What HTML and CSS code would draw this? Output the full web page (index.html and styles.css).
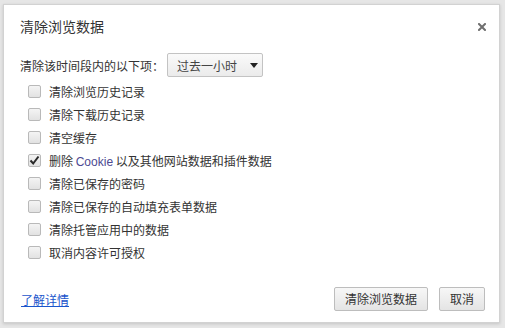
FILE: index.html
```html
<!DOCTYPE html>
<html lang="zh-CN">
<head>
<meta charset="utf-8">
<title>清除浏览数据</title>
<link rel="stylesheet" href="styles.css">
</head>
<body>
<div class="dialog">
  <div class="header">
    <h1 class="title">清除浏览数据</h1>
    <span class="close" aria-label="关闭">
      <svg width="8" height="8" viewBox="0 0 8 8"><path d="M1 1L7 7M7 1L1 7" stroke="#6f6f6f" stroke-width="2" stroke-linecap="square"/></svg>
    </span>
  </div>
  <div class="time-row">
    <span class="time-label">清除该时间段内的以下项：</span>
    <div class="select">
      <span class="select-text">过去一小时</span>
      <svg class="select-arrow" width="8" height="5" viewBox="0 0 8 5"><path d="M0 0H8L4 5Z" fill="#222"/></svg>
    </div>
  </div>
  <ul class="options">
    <li class="option"><span class="cb"></span><span class="label">清除浏览历史记录</span></li>
    <li class="option"><span class="cb"></span><span class="label">清除下载历史记录</span></li>
    <li class="option"><span class="cb"></span><span class="label">清空缓存</span></li>
    <li class="option"><span class="cb checked"><svg width="11" height="11" viewBox="0 0 11 11"><path d="M1.5 5.5L4.2 8.5L9.5 1.5" fill="none" stroke="#2a2a2a" stroke-width="2"/></svg></span><span class="label">删除 <span class="cookie">Cookie</span> 以及其他网站数据和插件数据</span></li>
    <li class="option"><span class="cb"></span><span class="label">清除已保存的密码</span></li>
    <li class="option"><span class="cb"></span><span class="label">清除已保存的自动填充表单数据</span></li>
    <li class="option"><span class="cb"></span><span class="label">清除托管应用中的数据</span></li>
    <li class="option"><span class="cb"></span><span class="label">取消内容许可授权</span></li>
  </ul>
  <div class="footer">
    <a class="link" href="#">了解详情</a>
    <div class="buttons">
      <button class="btn">清除浏览数据</button>
      <button class="btn">取消</button>
    </div>
  </div>
</div>
</body>
</html>
```

FILE: styles.css
```css
* { box-sizing: border-box; }
html, body { margin: 0; padding: 0; }
body {
  width: 505px;
  height: 328px;
  background: #e6e6e6;
  padding: 4px 5px 5px 3px;
  font-family: "Noto Sans CJK SC", "Noto Sans", sans-serif;
  font-size: 12px;
  color: #333;
  overflow: hidden;
}
.dialog {
  height: 319px;
  background: #fff;
  border: 1px solid #d2d2d2;
  box-shadow: 0 1px 3px rgba(0,0,0,0.15);
  padding: 0 14px 0 16px;
  display: flex;
  flex-direction: column;
}
.header {
  height: 41px;
  display: flex;
  align-items: center;
  justify-content: space-between;
}
.title {
  margin: 0;
  font-size: 14px;
  font-weight: normal;
  color: #333;
  line-height: 20px;
}
.close {
  display: flex;
  margin-top: 3px;
  margin-right: -1px;
}
.time-row {
  margin-top: 7px;
  display: flex;
  align-items: center;
  gap: 3px;
  height: 24px;
}
.select {
  width: 96px;
  height: 24px;
  border: 1px solid #c3c3c3;
  border-radius: 2px;
  background: linear-gradient(#fafafa, #ebebeb);
  display: flex;
  align-items: center;
  justify-content: space-between;
  padding: 0 4px 0 9px;
}
.select-text { color: #444; }
.options {
  list-style: none;
  margin: 3px 0 0;
  padding: 0 0 0 8px;
}
.option {
  height: 23px;
  display: flex;
  align-items: center;
  gap: 8px;
}
.cb {
  width: 13px;
  height: 13px;
  border: 1px solid #b9b9b9;
  border-radius: 2px;
  background: linear-gradient(#f4f4f4, #e2e2e2);
  display: flex;
  align-items: center;
  justify-content: center;
  flex: none;
}
.label { color: #333; }
.cookie { color: #4d4a92; font-family: "Liberation Sans", Arial, sans-serif; }
.footer {
  margin-top: auto;
  padding-bottom: 11px;
  display: flex;
  align-items: center;
  justify-content: space-between;
}
.link {
  color: #1a55cc;
  text-decoration: underline;
  margin-left: 1px;
}
.buttons {
  display: flex;
  gap: 11px;
}
.btn {
  height: 24px;
  padding: 0 10px;
  border: 1px solid #bdbdbd;
  border-radius: 2px;
  background: linear-gradient(#f7f7f7, #e4e4e4);
  font-family: "Noto Sans CJK SC", "Noto Sans", sans-serif;
  font-size: 12px;
  color: #333;
  line-height: 22px;
}
```
